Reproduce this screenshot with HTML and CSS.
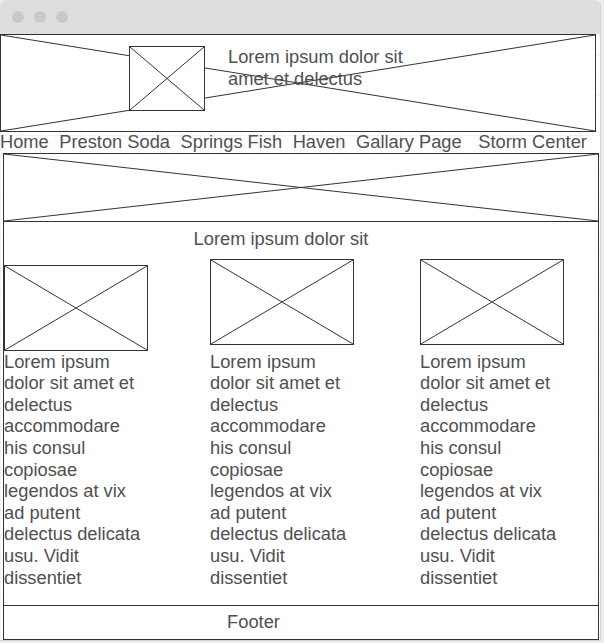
FILE: index.html
```html
<!DOCTYPE html>
<html lang="en">
<head>
    <meta charset="UTF-8">
    <meta name="viewport" content="width=device-width, initial-scale=1.0">
    <title>Wireframe</title>
    <link rel="stylesheet" href="styles.css">
</head>
<body>
    <div class="window">
        <div class="chrome">
            <span class="dot"></span>
            <span class="dot"></span>
            <span class="dot"></span>
        </div>

        <div class="page">
            <header class="masthead ph">
                <svg class="cross" viewBox="0 0 100 100" preserveAspectRatio="none"><line x1="0" y1="0" x2="100" y2="100"/><line x1="0" y1="100" x2="100" y2="0"/></svg>
                <div class="logo ph">
                    <svg class="cross" viewBox="0 0 100 100" preserveAspectRatio="none"><line x1="0" y1="0" x2="100" y2="100"/><line x1="0" y1="100" x2="100" y2="0"/></svg>
                </div>
                <p class="tagline">Lorem ipsum dolor sit amet et delectus</p>
            </header>

            <nav class="nav">
                <a href="#">Home</a>
                <a href="#">Preston Soda</a>
                <a href="#">Springs Fish</a>
                <a href="#">Haven</a>
                <a href="#">Gallary Page</a>
                <a href="#" class="nav-last">Storm Center</a>
            </nav>

            <main class="frame">
                <div class="banner ph">
                    <svg class="cross" viewBox="0 0 100 100" preserveAspectRatio="none"><line x1="0" y1="0" x2="100" y2="100"/><line x1="0" y1="100" x2="100" y2="0"/></svg>
                </div>

                <h2 class="section-title">Lorem ipsum dolor sit</h2>

                <div class="cards">
                    <div class="card card-first">
                        <div class="thumb ph">
                            <svg class="cross" viewBox="0 0 100 100" preserveAspectRatio="none"><line x1="0" y1="0" x2="100" y2="100"/><line x1="0" y1="100" x2="100" y2="0"/></svg>
                        </div>
                        <p>Lorem ipsum dolor sit amet et delectus accommodare his consul copiosae legendos at vix ad putent delectus delicata usu. Vidit dissentiet</p>
                    </div>
                    <div class="card">
                        <div class="thumb ph">
                            <svg class="cross" viewBox="0 0 100 100" preserveAspectRatio="none"><line x1="0" y1="0" x2="100" y2="100"/><line x1="0" y1="100" x2="100" y2="0"/></svg>
                        </div>
                        <p>Lorem ipsum dolor sit amet et delectus accommodare his consul copiosae legendos at vix ad putent delectus delicata usu. Vidit dissentiet</p>
                    </div>
                    <div class="card card-last">
                        <div class="thumb ph">
                            <svg class="cross" viewBox="0 0 100 100" preserveAspectRatio="none"><line x1="0" y1="0" x2="100" y2="100"/><line x1="0" y1="100" x2="100" y2="0"/></svg>
                        </div>
                        <p>Lorem ipsum dolor sit amet et delectus accommodare his consul copiosae legendos at vix ad putent delectus delicata usu. Vidit dissentiet</p>
                    </div>
                </div>

                <footer class="footer">Footer</footer>
            </main>
        </div>
    </div>
</body>
</html>
```

FILE: styles.css
```css
body {
    margin: 0;
    background: #ededed;
    font-family: 'Liberation Sans', Arial, sans-serif;
    font-size: 18.3px;
    line-height: 21.6px;
    color: #505050;
}
.window {
    width: 600px;
    height: 640px;
    background: #fff;
    border-right: 1px solid #d4d4d4;
    border-bottom: 1px solid #d4d4d4;
    border-radius: 6px 6px 0 0;
    overflow: hidden;
}
.chrome {
    height: 34px;
    background: #dedede;
    display: flex;
    align-items: center;
    gap: 10px;
    padding-left: 12px;
}
.dot {
    width: 12px;
    height: 12px;
    border-radius: 50%;
    background: #c9c9c9;
}
.page {
    height: 606px;
    background-color: #fff;
    background-image:
        linear-gradient(#f2f2f2 1px, transparent 1px),
        linear-gradient(90deg, #f2f2f2 1px, transparent 1px);
    background-size: 20px 20px;
    background-position: 0 1px;
}

/* placeholder boxes with a cross */
.ph {
    position: relative;
    box-sizing: border-box;
    background: #fff;
}
.cross {
    position: absolute;
    top: 0;
    left: 0;
    width: 100%;
    height: 100%;
}
.cross line {
    stroke: #333;
    stroke-width: 1;
    vector-effect: non-scaling-stroke;
}

.masthead {
    width: 596px;
    height: 98px;
    border: 1px solid #333;
    display: flex;
    align-items: flex-start;
    padding: 11px 0 0 128px;
}
.logo {
    width: 76px;
    height: 65px;
    border: 1px solid #333;
}
.tagline {
    position: relative;
    width: 200px;
    margin: 0 0 0 23px;
}

.nav {
    display: flex;
    gap: 10.5px;
    height: 21px;
    line-height: 20px;
}
.nav a {
    color: #505050;
    text-decoration: none;
    white-space: nowrap;
}
.nav .nav-last {
    margin-left: 6px;
}

.frame {
    box-sizing: border-box;
    width: 596px;
    height: 487px;
    margin-left: 3px;
    border: 1px solid #333;
    background: #fff;
    display: flex;
    flex-direction: column;
}
.banner {
    height: 68px;
    flex-shrink: 0;
    border-bottom: 1px solid #333;
}
.section-title {
    margin: 0;
    padding: 6px 40px 0 0;
    font-size: 18.3px;
    font-weight: normal;
    text-align: center;
}
.cards {
    flex: 1;
    display: flex;
    gap: 62px;
    padding-top: 9px;
}
.card {
    width: 144px;
}
.card-last {
    margin-left: 4px;
}
.thumb {
    width: 144px;
    height: 86px;
    border: 1px solid #333;
    margin-bottom: 6px;
}
.card-first .thumb {
    margin: 6px 0 0;
}
.card p {
    width: 140px;
    margin: 0;
}
.footer {
    height: 34px;
    box-sizing: border-box;
    border-top: 1px solid #333;
    line-height: 31px;
    text-align: center;
    padding-right: 95px;
}
```
